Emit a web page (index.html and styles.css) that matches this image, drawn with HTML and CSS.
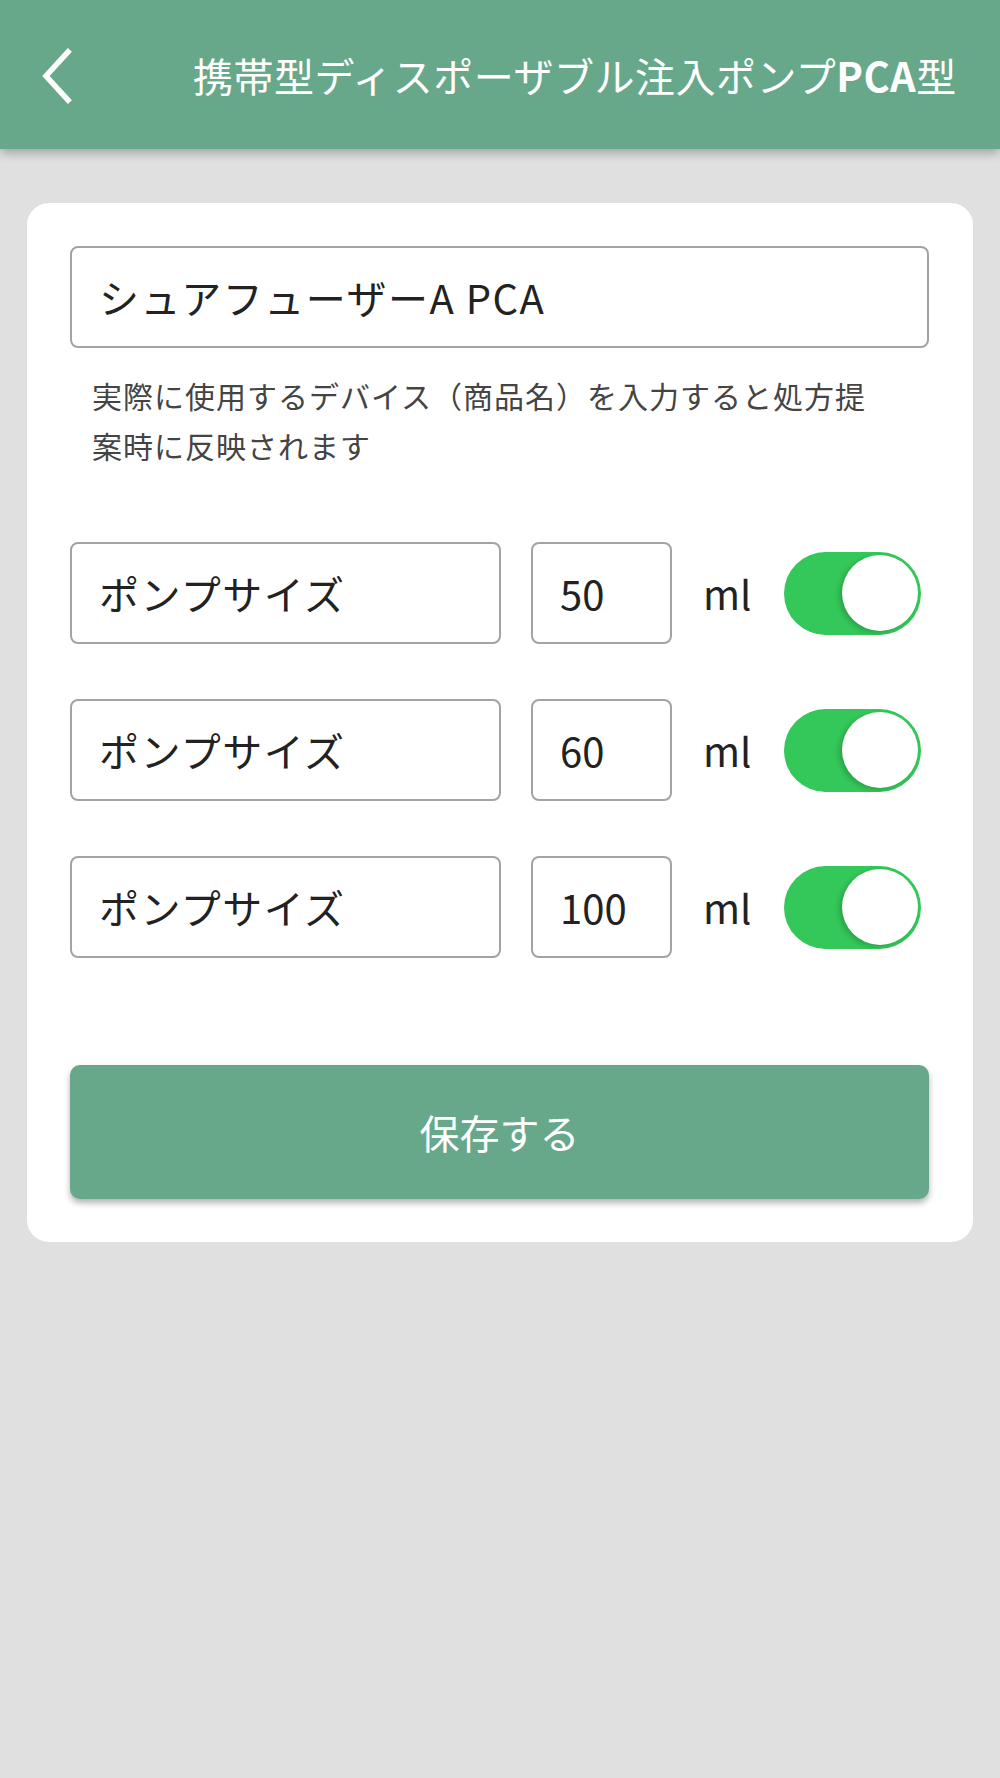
FILE: index.html
```html
<!DOCTYPE html>
<html lang="ja">
<head>
    <meta charset="UTF-8">
    <meta name="viewport" content="width=device-width, initial-scale=1.0">
    <title>携帯型ディスポーザブル注入ポンプPCA型</title>
    <link rel="stylesheet" href="styles.css">
</head>
<body>
    <header class="app-bar">
        <button class="back" aria-label="戻る">
            <svg width="34" height="56" viewBox="0 0 34 56">
                <path d="M28 4 L6 28 L28 52" fill="none" stroke="#fff" stroke-width="5.5" stroke-linecap="square" stroke-linejoin="miter"/>
            </svg>
        </button>
        <h1 class="title">携帯型ディスポーザブル注入ポンプ<span class="latin">PCA</span>型</h1>
    </header>

    <main class="card">
        <input class="field device" value="シュアフューザーA PCA">
        <p class="hint">実際に使用するデバイス（商品名）を入力すると処方提案時に反映されます</p>

        <ul class="sizes">
            <li class="size-row">
                <input class="field label" value="ポンプサイズ">
                <input class="field amount" value="50">
                <span class="unit">ml</span>
                <span class="toggle on"><span class="knob"></span></span>
            </li>
            <li class="size-row">
                <input class="field label" value="ポンプサイズ">
                <input class="field amount" value="60">
                <span class="unit">ml</span>
                <span class="toggle on"><span class="knob"></span></span>
            </li>
            <li class="size-row">
                <input class="field label" value="ポンプサイズ">
                <input class="field amount" value="100">
                <span class="unit">ml</span>
                <span class="toggle on"><span class="knob"></span></span>
            </li>
        </ul>

        <button class="save">保存する</button>
    </main>
</body>
</html>
```

FILE: styles.css
```css
:root {
    --primary: #67a88b;
    --bg: #e0e0e0;
    --text: #222;
    --border: #a3a3a3;
    --switch: #34c759;
}

body {
    margin: 0;
    min-height: 1778px;
    background: var(--bg);
    color: var(--text);
    font-family: "Noto Sans CJK JP", "Noto Sans", sans-serif;
}

.app-bar {
    height: 149px;
    background: var(--primary);
    display: flex;
    align-items: center;
    box-shadow: 0 4px 10px rgba(0, 0, 0, 0.28);
    position: relative;
}

.back {
    background: none;
    border: none;
    padding: 0;
    margin-left: 40px;
    width: 34px;
    height: 56px;
    display: flex;
    margin-top: 2px;
}

.title {
    margin: 0 0 0 119px;
    font-size: 40px;
    font-weight: 400;
    letter-spacing: 0.5px;
    color: #fff;
    line-height: 1;
    white-space: nowrap;
}

.title .latin {
    font-weight: 700;
}

.card {
    display: block;
    margin: 54px 27px 0;
    padding: 43px 44px 43px 43px;
    background: #fff;
    border-radius: 22px;
}

.field {
    box-sizing: border-box;
    height: 102px;
    border: 2px solid var(--border);
    border-radius: 8px;
    font-family: inherit;
    font-size: 40px;
    letter-spacing: 1.5px;
    color: var(--text);
    background: #fff;
    padding: 0 27px;
    outline: none;
}

.device {
    display: block;
    width: 100%;
}

.hint {
    margin: 22px 0 0;
    padding: 0 47px 0 22px;
    font-size: 30px;
    letter-spacing: 1px;
    line-height: 50px;
    color: #444;
}

.sizes {
    list-style: none;
    margin: 72px 0 0;
    padding: 0;
    display: flex;
    flex-direction: column;
    gap: 55px;
}

.size-row {
    display: flex;
    align-items: center;
}

.label {
    width: 431px;
}

.amount {
    width: 141px;
    margin-left: 30px;
    letter-spacing: 0;
}

.unit {
    margin-left: 31px;
    font-size: 40px;
    line-height: 1;
    width: 42px;
}

.toggle {
    margin-left: 39px;
    width: 137px;
    height: 83px;
    box-sizing: border-box;
    border-radius: 42px;
    background: var(--switch);
    display: flex;
    align-items: center;
    justify-content: flex-end;
    padding: 0 3px;
}

.knob {
    width: 76px;
    height: 76px;
    border-radius: 50%;
    background: #fff;
    box-shadow: -3px 2px 5px rgba(0, 0, 0, 0.18);
}

.save {
    display: block;
    width: 100%;
    height: 134px;
    margin-top: 107px;
    border: none;
    border-radius: 10px;
    background: var(--primary);
    color: #fff;
    font-family: inherit;
    font-size: 40px;
    box-shadow: 0 4px 6px rgba(0, 0, 0, 0.3);
    cursor: pointer;
}
```
